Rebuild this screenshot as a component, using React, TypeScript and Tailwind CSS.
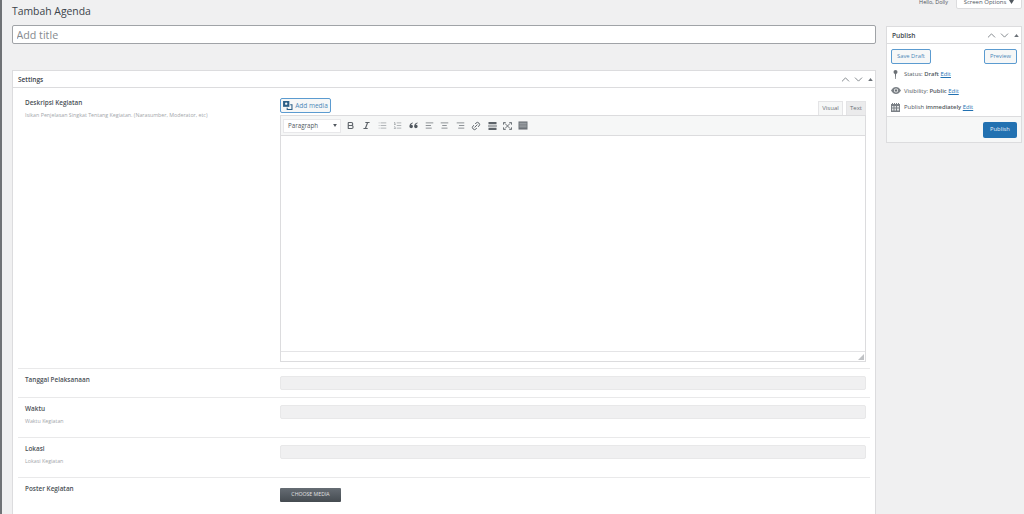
import React from "react";
import { Bold, Italic, List, ListOrdered, AlignLeft, AlignCenter, AlignRight, Link2, ChevronUp, ChevronDown } from "lucide-react";

const font = { fontFamily: '"Open Sans","Noto Sans",sans-serif' };

function Arrows() {
  return (
    <div className="flex items-center text-[#6a7076]">
      <ChevronUp size={13} strokeWidth={1.5} className="mr-[-0.500px]" />
      <ChevronDown size={13} strokeWidth={1.5} className="mr-[1.500px]" />
      <svg width="9" height="9" viewBox="0 0 9 9"><path d="M2.200 6h4.600L4.500 3z" fill="#6a7076" /></svg>
    </div>
  );
}

function MediaIcon() {
  return (
    <svg width="10" height="9" viewBox="0 0 11 10" fill="#2c5f87" className="shrink-0">
      <path d="M0 0h7v6.500H0z" />
      <circle cx="3.500" cy="3" r="1.300" fill="#f6f7f7" />
      <path d="M8 3.500h2.500V10H4V7.500h1.200v1.300H9.300V4.700H8z" />
    </svg>
  );
}

function Slot({ children }: { children: React.ReactNode }) {
  return <span className="flex items-center justify-center w-[15.700px] shrink-0">{children}</span>;
}

function Toolbar() {
  const c = "text-[#5d6369] shrink-0";
  return (
    <div className="flex items-center h-[20px] bg-[#f6f7f7] border-b border-[#dcdcde] pl-[2px]">
      <div className="flex items-center justify-between w-[58px] h-[14px] bg-white border border-[#e8e8ea] pl-[4px] pr-[3px] text-[6.200px] text-[#50575e] mr-[2px] shrink-0">
        <span>Paragraph</span>
        <svg width="4" height="3" viewBox="0 0 5 4"><path d="M0 0h5L2.500 4z" fill="#50575e" /></svg>
      </div>
      <div className="flex items-center">
        <Slot><Bold size={9} strokeWidth={3} className={c} /></Slot>
        <Slot><Italic size={9} strokeWidth={3} className={c} /></Slot>
        <Slot><List size={9} strokeWidth={1.500} className="text-[#7b8086]" /></Slot>
        <Slot><ListOrdered size={9} strokeWidth={1.500} className="text-[#7b8086]" /></Slot>
        <Slot>
          <svg width="9" height="7" viewBox="0 0 10 8" fill="#50575e">
            <path d="M4.300 0.500C2 1 0.300 2.500 0.300 5a2 2 0 1 0 3.600-1.200C3.300 3.200 2.400 3.300 2.100 3.200 2.300 2.300 3.200 1.600 4.300 1.300zM9.700 0.500C7.400 1 5.700 2.500 5.700 5a2 2 0 1 0 3.600-1.200C8.700 3.200 7.800 3.300 7.500 3.200 7.700 2.300 8.600 1.600 9.700 1.300z" />
          </svg>
        </Slot>
        <Slot><AlignLeft size={9} strokeWidth={1.800} className={c} /></Slot>
        <Slot><AlignCenter size={9} strokeWidth={1.800} className={c} /></Slot>
        <Slot><AlignRight size={9} strokeWidth={1.800} className={c} /></Slot>
        <Slot><Link2 size={10} strokeWidth={2.200} className={`${c} -rotate-45`} /></Slot>
        <Slot>
          <svg width="9" height="8" viewBox="0 0 10 9" fill="#5d6369">
            <path d="M0.500 0h9v2.500h-9zM0 3.800h10v1.200H0zM0.500 6.500h9V9h-9z" />
          </svg>
        </Slot>
        <Slot>
          <svg width="9" height="8" viewBox="0 0 10 9" fill="none" stroke="#5d6369" strokeWidth="1">
            <path d="M2 1.500l6 6M8 1.500l-6 6" />
            <path d="M0.500 3V0.500H3M7 0.500h2.500V3M0.500 6v2.500H3M7 8.500h2.500V6" />
          </svg>
        </Slot>
        <Slot>
          <svg width="10" height="9" viewBox="0 0 11 10" fill="#6d7278">
            <path d="M0.500 0.500h10v9h-10z" />
            <path d="M1.500 2.500h8M1.500 4.500h8M1.500 6.500h8" stroke="#c9cccf" strokeWidth="0.700" />
          </svg>
        </Slot>
      </div>
    </div>
  );
}

function Field({ label, sub, children, h, last }: { label: string; sub?: string; children: React.ReactNode; h: string; last?: boolean }) {
  return (
    <div className={`flex px-[7px] ${h} ${last ? "" : "border-b border-[#e9e9ea]"}`}>
      <div className="w-[255px] shrink-0">
        <div className="text-[6.400px] leading-[9px] font-semibold text-[#4a5056] whitespace-nowrap">{label}</div>
        {sub && <div className="text-[5.300px] leading-[8px] mt-[4px] text-[#a3a6aa] whitespace-nowrap">{sub}</div>}
      </div>
      <div className="w-[586px] shrink-0">{children}</div>
    </div>
  );
}

function FlatInput() {
  return <input disabled className="block w-full h-[14px] bg-[#f0f0f1] border border-[#e8e8e9] rounded-[2px] mt-[1px]" />;
}

export default function App() {
  return (
    <div style={font} className="flex h-[514px] w-[1024px] overflow-hidden bg-[#f0f0f1] text-[#50575e]">
      <div className="w-[2px] shrink-0 bg-[#6f7276]" />
      <div className="w-[864px] ml-[10px] shrink-0">
        <h1 className="text-[10.400px] leading-[17px] font-normal text-[#3c434a] mt-[3px]">Tambah Agenda</h1>
        <input
          placeholder="Add title"
          style={font}
          className="block w-full h-[19px] mt-[5px] px-[3.500px] pt-[1px] bg-white border border-[#a0a3a7] rounded-[2px] text-[10.700px] outline-none placeholder:text-[#868a8f]"
        />
        <div className="mt-[26px] h-[460px] bg-white border border-[#dcdcde]">
          <div className="flex items-center justify-between h-[17px] border-b border-[#dcdcde] pl-[5px]">
            <span className="text-[6.500px] pt-[1px] font-semibold text-[#3c434a]">Settings</span>
            <Arrows />
          </div>
          <div className="mx-[5px]">
            <Field label="Deskripsi Kegiatan" sub="Isikan Penjelasan Singkat Tentang Kegiatan. (Narasumber, Moderator, etc)" h="h-[281px] pt-[10px]">
              <div className="flex items-end justify-between h-[17px] mt-[1px] mb-[-1px]">
                <button className="flex items-center gap-[2px] h-[15px] w-[51px] mb-[3px] justify-center bg-[#f6f7f7] border border-[#5b9bd0] rounded-[2px] text-[6.500px] text-[#4b87b8] whitespace-nowrap">
                  <MediaIcon />
                  Add media
                </button>
                <div className="flex gap-[3px] mb-[1px] text-[6px] text-[#6a7076]">
                  <span className="w-[25px] h-[14px] flex items-center justify-center bg-[#f6f7f7] border border-[#e4e4e6] border-b-0">Visual</span>
                  <span className="w-[20px] h-[14px] flex items-center justify-center bg-[#ebebec] border border-[#e4e4e6] border-b-0">Text</span>
                </div>
              </div>
              <div className="border border-[#dcdcde] h-[247px] flex flex-col bg-white">
                <Toolbar />
                <div className="flex-1" />
                <div className="h-[10px] border-t border-[#e4e4e6] flex justify-end items-end p-[1px]">
                  <svg width="6" height="6" viewBox="0 0 6 6"><path d="M6 0v6H0z" fill="#c0c2c5" /></svg>
                </div>
              </div>
            </Field>
            <Field label="Tanggal Pelaksanaan" h="h-[29px] pt-[6px]"><FlatInput /></Field>
            <Field label="Waktu" sub="Waktu Kegiatan" h="h-[40px] pt-[6px]"><FlatInput /></Field>
            <Field label="Lokasi" sub="Lokasi Kegiatan" h="h-[40px] pt-[6px]"><FlatInput /></Field>
            <Field label="Poster Kegiatan" h="h-[36px] pt-[6px]" last>
              <button className="block w-[61px] h-[14px] mt-[4px] bg-gradient-to-b from-[#666d74] to-[#454b51] rounded-[1px] text-[5.200px] text-[#e0e0e0] whitespace-nowrap">CHOOSE MEDIA</button>
            </Field>
          </div>
        </div>
      </div>
      <div className="w-[136px] ml-[10px] shrink-0">
        <div className="h-[9px] overflow-hidden flex items-end justify-end">
          <span className="text-[5.500px] leading-[15px] text-[#50575e] mr-[8px] -mb-[1px] whitespace-nowrap">Hello, Dolly</span>
          <div className="flex items-center justify-center gap-[3px] w-[66px] h-[16px] bg-white border border-[#dcdcde] rounded-b-[2px] text-[6px] text-[#50575e] pt-[2px] whitespace-nowrap">
            Screen Options
            <svg width="5" height="4" viewBox="0 0 5 4"><path d="M0 0h5L2.500 4z" fill="#50575e" /></svg>
          </div>
        </div>
        <div className="mt-[17px] h-[117px] bg-white border border-[#dcdcde] flex flex-col">
          <div className="flex items-center justify-between h-[17px] border-b border-[#dcdcde] pl-[5px]">
            <span className="text-[6.600px] pt-[1px] font-semibold text-[#3c434a]">Publish</span>
            <Arrows />
          </div>
          <div className="flex-1 px-[4px] pt-[5px]">
            <div className="flex justify-between">
              <button className="w-[40px] h-[15px] bg-[#f6f7f7] border border-[#5b9bd0] rounded-[2px] text-[5.800px] text-[#4b87b8] whitespace-nowrap">Save Draft</button>
              <button className="w-[33px] h-[15px] bg-[#f6f7f7] border border-[#5b9bd0] rounded-[2px] text-[5.800px] text-[#4b87b8] whitespace-nowrap">Preview</button>
            </div>
            <div className="flex flex-col gap-[4.500px] mt-[4px] text-[5.900px] leading-[12px] whitespace-nowrap">
              <div className="flex items-center">
                <span className="w-[13px] flex justify-center pr-[4px] shrink-0">
                  <svg width="5" height="9" viewBox="0 0 5 9" fill="#6b7075">
                    <circle cx="2.500" cy="2" r="2" />
                    <path d="M1.900 3h1.200l-.3 6h-.6z" />
                  </svg>
                </span>
                <span>Status: <b className="font-semibold">Draft</b> <span className="text-[#2271b1] underline">Edit</span></span>
              </div>
              <div className="flex items-center">
                <span className="w-[13px] shrink-0">
                  <svg width="10" height="7" viewBox="0 0 10 7">
                    <path d="M0 3.500C1.500 1 3 0 5 0s3.500 1 5 3.500C8.500 6 7 7 5 7S1.500 6 0 3.500z" fill="#7b8086" />
                    <circle cx="5" cy="3.500" r="2" fill="#fff" />
                    <circle cx="5" cy="3.500" r="1.200" fill="#6b7075" />
                  </svg>
                </span>
                <span>Visibility: <b className="font-semibold">Public</b> <span className="text-[#2271b1] underline">Edit</span></span>
              </div>
              <div className="flex items-center">
                <span className="w-[13px] shrink-0">
                  <svg width="9" height="9" viewBox="0 0 9 9" fill="#7b8086">
                    <path d="M1 0h1v1h1V0h1v1h1V0h1v1h1V0h1v1h1v8H0V1h1z" />
                    <path d="M1 3h1.500v1.500H1zM3.500 3H5v1.500H3.500zM6 3h2v1.500H6zM1 5.500h1.500V7.500H1zM3.500 5.500H5V7.500H3.500zM6 5.500h2V7.500H6z" fill="#e4e5e6" />
                  </svg>
                </span>
                <span>Publish <b className="font-semibold">immediately</b> <span className="text-[#2271b1] underline">Edit</span></span>
              </div>
            </div>
          </div>
          <div className="flex justify-end items-center h-[26px] bg-[#f6f7f7] border-t border-[#dcdcde] pr-[4px]">
            <button className="w-[34px] h-[16px] bg-[#2271b1] rounded-[2px] text-[5.800px] text-[#e6eff6]">Publish</button>
          </div>
        </div>
      </div>
    </div>
  );
}
